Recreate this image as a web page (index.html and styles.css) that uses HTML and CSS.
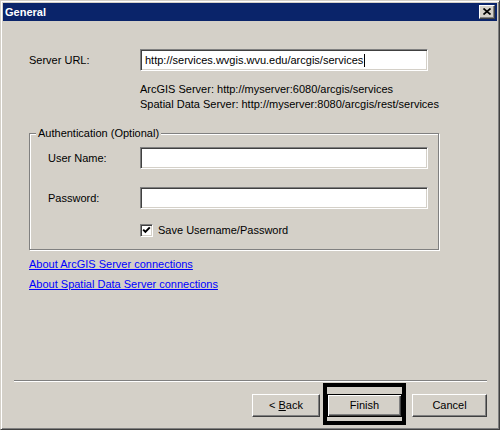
FILE: index.html
```html
<!DOCTYPE html>
<html>
<head>
<meta charset="utf-8">
<title>General</title>
<link rel="stylesheet" href="styles.css">
</head>
<body>
<div class="window">
  <div class="titlebar">
    <span class="title">General</span>
    <span class="close-btn"><svg width="8" height="7" viewBox="0 0 8 7"><path d="M0.5 0.5 L7.5 6.5 M7.5 0.5 L0.5 6.5" stroke="#000" stroke-width="1.7" fill="none"/></svg></span>
  </div>
  <div class="client">
    <div class="content">
      <div class="field url-field">
        <span class="lbl">Server URL:</span>
        <div class="textbox">http://services.wvgis.wvu.edu/arcgis/services<span class="caret"></span></div>
      </div>
      <div class="hints">
        <div>ArcGIS Server: http://myserver:6080/arcgis/services</div>
        <div>Spatial Data Server: http://myserver:8080/arcgis/rest/services</div>
      </div>
      <div class="group">
        <span class="legend">Authentication (Optional)</span>
        <div class="field group-field">
          <span class="lbl">User Name:</span>
          <div class="textbox"></div>
        </div>
        <div class="field group-field spaced">
          <span class="lbl">Password:</span>
          <div class="textbox"></div>
        </div>
        <div class="check-row">
          <span class="checkbox"><svg width="9" height="9" viewBox="0 0 9 9"><path d="M1.2 3.6 L3.4 5.9 L7.8 1.4" stroke="#000" stroke-width="2" fill="none"/></svg></span>
          <span>Save Username/Password</span>
        </div>
      </div>
      <div class="links">
        <a class="link" href="#">About ArcGIS Server connections</a>
        <a class="link" href="#">About Spatial Data Server connections</a>
      </div>
    </div>
    <div class="footer">
      <div class="separator"></div>
      <div class="buttons">
        <button class="btn btn-back">&lt; <u>B</u>ack</button>
        <span class="default-wrap"><button class="btn btn-default">Finish</button></span>
        <button class="btn btn-cancel">Cancel</button>
      </div>
    </div>
  </div>
</div>
</body>
</html>
```
FILE: styles.css
```css
html, body {
  margin: 0;
  padding: 0;
  background: #d4d0c8;
}
body {
  font-family: "Liberation Sans", Arial, sans-serif;
  font-size: 11px;
  color: #000;
}
.window {
  box-sizing: border-box;
  width: 500px;
  height: 430px;
  border: 1px solid;
  border-color: #d4d0c8 #404040 #404040 #d4d0c8;
  box-shadow: inset 1px 1px #fff, inset -1px -1px #808080;
  padding: 2px;
  background: #d4d0c8;
  display: flex;
  flex-direction: column;
}
.titlebar {
  height: 18px;
  background: #0a246a;
  display: flex;
  align-items: center;
  justify-content: space-between;
  padding: 0 2px 0 2px;
  flex: none;
}
.title {
  color: #fff;
  font-weight: bold;
  font-size: 11px;
  line-height: 13px;
}
.close-btn {
  box-sizing: border-box;
  width: 16px;
  height: 14px;
  background: #d4d0c8;
  border: 1px solid;
  border-color: #fff #404040 #404040 #fff;
  box-shadow: inset -1px -1px #808080;
  display: flex;
  align-items: center;
  justify-content: center;
  padding: 0 0 1px 0;
}
.close-btn svg {
  display: block;
}
.client {
  flex: 1;
  display: flex;
  flex-direction: column;
}
.content {
  flex: 1;
  padding: 28px 0 0 26px;
}
.field {
  display: grid;
  grid-template-columns: 111px 288px;
  align-items: center;
}
.lbl {
  line-height: 13px;
}
.textbox {
  box-sizing: border-box;
  height: 22px;
  background: #fff;
  border: 1px solid;
  border-color: #808080 #fff #fff #808080;
  box-shadow: inset 1px 1px #404040, inset -1px -1px #d4d0c8;
  padding: 0 3px 0 4px;
  display: flex;
  align-items: center;
  line-height: 14px;
  white-space: nowrap;
}
.caret {
  display: inline-block;
  width: 1px;
  height: 13px;
  background: #000;
  margin-left: 1px;
}
.hints {
  margin: 11px 0 0 111px;
  line-height: 15px;
}
.group {
  position: relative;
  box-sizing: border-box;
  width: 410px;
  margin-top: 21px;
  border: 1px solid #808080;
  box-shadow: inset 1px 1px #fff, 1px 1px #fff;
  padding: 13px 0 12px 18px;
}
.legend {
  position: absolute;
  top: -7px;
  left: 6px;
  padding: 0 2px;
  line-height: 13px;
  background: #d4d0c8;
}
.group-field {
  grid-template-columns: 92px 288px;
}
.spaced {
  margin-top: 18px;
}
.check-row {
  margin: 15px 0 0 92px;
  display: flex;
  align-items: center;
  gap: 5px;
  height: 13px;
  line-height: 13px;
}
.checkbox {
  box-sizing: border-box;
  width: 13px;
  height: 13px;
  background: #fff;
  border: 1px solid;
  border-color: #808080 #fff #fff #808080;
  box-shadow: inset 1px 1px #404040, inset -1px -1px #d4d0c8;
  display: flex;
  align-items: center;
  justify-content: center;
  flex: none;
}
.checkbox svg {
  display: block;
}
.links {
  display: flex;
  flex-direction: column;
  align-items: flex-start;
  gap: 5px;
  margin-top: 7px;
}
.link {
  color: #0000ff;
  text-decoration: underline;
  line-height: 15px;
}
.footer {
  flex: none;
  padding: 0 10px 10px 11px;
}
.separator {
  height: 0;
  border-top: 1px solid #808080;
  border-bottom: 1px solid #fff;
}
.buttons {
  margin-top: 12px;
  display: flex;
  justify-content: flex-end;
  align-items: center;
}
.btn {
  box-sizing: border-box;
  height: 23px;
  width: 75px;
  margin: 0;
  padding: 0;
  font-family: "Liberation Sans", Arial, sans-serif;
  font-size: 11px;
  color: #000;
  background: #d4d0c8;
  border: 1px solid;
  border-color: #fff #404040 #404040 #fff;
  box-shadow: inset -1px -1px #808080;
  border-radius: 0;
  line-height: 13px;
}
.btn-back {
  width: 68px;
  margin-right: 7px;
}
.btn-back u {
  text-decoration: underline;
}
.default-wrap {
  position: relative;
  display: block;
  margin-right: 10px;
}
.btn-default {
  display: block;
  border: 1px solid #000;
  box-shadow: inset 1px 1px #fff, inset -1px -1px #404040, inset -2px -2px #808080;
}
.default-wrap::after {
  content: "";
  position: absolute;
  left: -4px;
  top: -11px;
  width: 83px;
  height: 42px;
  box-sizing: border-box;
  border: 4px solid #000;
  pointer-events: none;
}
```
